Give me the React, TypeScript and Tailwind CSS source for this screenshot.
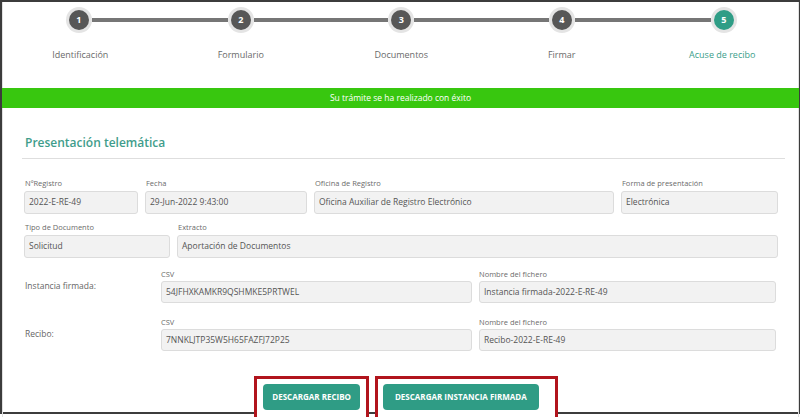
import React from 'react';

const STEPS = ['Identificación', 'Formulario', 'Documentos', 'Firmar', 'Acuse de recibo'];

function Step({ n, label, first, last, active }: { n: number; label: string; first: boolean; last: boolean; active: boolean }) {
  return (
    <div className="flex flex-col items-center">
      <div className="flex w-full items-center">
        <div className={first ? 'flex-1' : 'flex-1 h-[4px] bg-[#767676] mr-[3px]'} />
        <div
          className={
            'w-5 h-5 rounded-full flex items-center justify-center text-white text-[9px] font-bold shadow-[0_0_0_3px_#e4e4e4] ' +
            (active ? 'bg-[#2f9d86]' : 'bg-[#575757]')
          }
        >
          {n}
        </div>
        <div className={last ? 'flex-1' : 'flex-1 h-[4px] bg-[#767676] ml-[3px]'} />
      </div>
      <div className={'mt-[19px] text-[9px] leading-[12px] ' + (active ? 'text-[#3a9e8a]' : 'text-[#6a6a6a]')}>{label}</div>
    </div>
  );
}

function Field({ label, value, w }: { label: string; value: string; w: string }) {
  return (
    <div className={'flex flex-col ' + w}>
      <div className="text-[7.5px] leading-[10px] text-[#6b6b6b] mb-[3px] pl-px">{label}</div>
      <div className="h-[23px] bg-[#f2f2f2] border border-[#dcdcdc] rounded-[3px] flex items-center px-[4px] text-[8.5px] text-[#555]">
        {value}
      </div>
    </div>
  );
}

function FileRow({ label, csv, file }: { label: string; csv: string; file: string }) {
  return (
    <div className="flex items-center">
      <div className="w-[137px] text-[8.5px] text-[#666] pl-px">{label}</div>
      <div className="flex gap-[7px]">
        <div className="flex flex-col w-[311px]">
          <div className="text-[7.5px] leading-[10px] text-[#6b6b6b] mb-[2px]">CSV</div>
          <div className="h-[22px] bg-[#f2f2f2] border border-[#dcdcdc] rounded-[3px] flex items-center px-[4px] text-[8.5px] text-[#555]">
            {csv}
          </div>
        </div>
        <div className="flex flex-col w-[297px]">
          <div className="text-[7.5px] leading-[10px] text-[#6b6b6b] mb-[2px]">Nombre del fichero</div>
          <div className="h-[22px] bg-[#f2f2f2] border border-[#dcdcdc] rounded-[3px] flex items-center px-[4px] text-[8.5px] text-[#555]">
            {file}
          </div>
        </div>
      </div>
    </div>
  );
}

export default function App() {
  return (
    <div className="w-[800px] h-[417px] bg-white overflow-hidden" style={{ fontFamily: '"Open Sans", "Liberation Sans", sans-serif' }}>
      <div className="h-[414px] border-2 border-r border-[#3c3c3c] flex flex-col">
        {/* stepper */}
        <div className="shrink-0 h-[86px] border-x border-[#e2e2e2] overflow-hidden">
          <div className="grid grid-cols-[repeat(5,160.5px)] -ml-[3px] pt-[8px]">
            {STEPS.map((s, i) => (
              <Step key={s} n={i + 1} label={s} first={i === 0} last={i === STEPS.length - 1} active={i === 4} />
            ))}
          </div>
        </div>

        <div className="shrink-0 h-[20px] bg-[#38c70f] flex items-center justify-center text-white text-[8.5px]">
          Su trámite se ha realizado con éxito
        </div>

        {/* card */}
        <div className="flex-1 border-x border-[#e0e0e0] pl-[19px] pr-[13px] pt-[26px]">
          <h2 className="text-[12px] leading-[18px] font-semibold text-[#3f9d8b] pl-[3px]">Presentación telemática</h2>
          <div className="mt-[6px] h-px bg-[#dedede]" />

          <div className="pl-[2px] pr-[5px]">
            <div className="flex gap-[7px] mt-[19px]">
              <Field w="w-[114px]" label="NºRegistro" value="2022-E-RE-49" />
              <Field w="w-[162px]" label="Fecha" value="29-Jun-2022 9:43:00" />
              <Field w="w-[300px]" label="Oficina de Registro" value="Oficina Auxiliar de Registro Electrónico" />
              <Field w="w-[157px]" label="Forma de presentación" value="Electrónica" />
            </div>
            <div className="flex gap-[7px] mt-[8px]">
              <Field w="w-[146px]" label="Tipo de Documento" value="Solicitud" />
              <Field w="w-[601px]" label="Extracto" value="Aportación de Documentos" />
            </div>
            <div className="mt-[11px]">
              <FileRow label="Instancia firmada:" csv="54JFHXKAMKR9QSHMKE5PRTWEL" file="Instancia firmada-2022-E-RE-49" />
            </div>
            <div className="mt-[14px]">
              <FileRow label="Recibo:" csv="7NNKLJTP35W5H65FAZFJ72P25" file="Recibo-2022-E-RE-49" />
            </div>
          </div>

          <div className="flex justify-center gap-[6px] mt-[25px] ml-[5px]">
            <div className="relative z-10 bg-white border-[3px] border-[#b1141c] pl-[6px] pr-[6px] pt-[3px] h-[46px]">
              <button className="h-[26px] px-[9px] rounded-[4px] bg-[#2f9c85] text-white text-[8px] font-bold">
                DESCARGAR RECIBO
              </button>
            </div>
            <div className="relative z-10 bg-white border-[3px] border-[#b1141c] pl-[5px] pr-[16px] pt-[3px] h-[46px]">
              <button className="h-[26px] px-[12px] rounded-[4px] bg-[#2f9c85] text-white text-[8px] font-bold">
                DESCARGAR INSTANCIA FIRMADA
              </button>
            </div>
          </div>
        </div>
      </div>
    </div>
  );
}
